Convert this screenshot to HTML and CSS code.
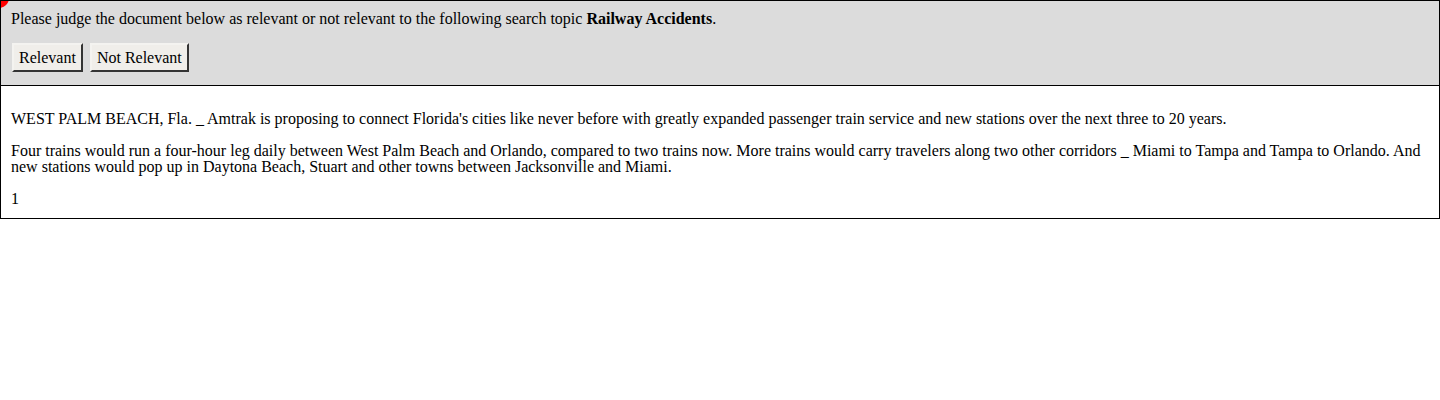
FILE: index.html
```html
<!DOCTYPE html>
<html>
<head>
<meta charset="utf-8">
<title>Relevance judgment</title>
<link rel="stylesheet" href="styles.css">
</head>
<body>
<div class="frame">
  <span class="dot"></span>
  <div class="judge">
    <div class="prompt">Please judge the document below as relevant or not relevant to the following search topic <b>Railway Accidents</b>.</div>
    <div class="actions">
      <button class="btn">Relevant</button>
      <button class="btn">Not Relevant</button>
    </div>
  </div>
  <div class="doc">
    <p>WEST PALM BEACH, Fla. _ Amtrak is proposing to connect Florida's cities like never before with greatly expanded passenger train service and new stations over the next three to 20 years.</p>
    <p>Four trains would run a four-hour leg daily between West Palm Beach and Orlando, compared to two trains now. More trains would carry travelers along two other corridors _ Miami to Tampa and Tampa to Orlando. And new stations would pop up in Daytona Beach, Stuart and other towns between Jacksonville and Miami.</p>
    <p class="num">1</p>
  </div>
</div>
</body>
</html>
```

FILE: styles.css
```css
html, body {
  margin: 0;
  padding: 0;
  background: #fff;
}
body {
  font-family: "Liberation Serif", "Times New Roman", serif;
  font-size: 16px;
  line-height: 16px;
  color: #000;
}
.frame {
  position: relative;
  width: 1440px;
  box-sizing: border-box;
  border: 1px solid #000;
  overflow: hidden;
}
.dot {
  position: absolute;
  left: -12px;
  top: -13px;
  width: 20px;
  height: 20px;
  border-radius: 50%;
  background: #ff0000;
}
.judge {
  background: #dcdcdc;
  border-bottom: 1px solid #000;
  padding: 10px 10px 13px 10px;
}
.actions {
  display: flex;
  gap: 7px;
  margin-top: 16px;
  padding-left: 1px;
}
.btn {
  font-family: "Liberation Serif", "Times New Roman", serif;
  font-size: 16px;
  line-height: 18px;
  height: 29px;
  padding: 0 5px;
  background: #f0eeea;
  color: #000;
  border: 2px outset #f4f3f0;
  border-right-color: #888;
  border-bottom-color: #888;
  border-radius: 0;
}
.doc {
  padding: 9px 10px 11px 10px;
}
.doc p {
  margin: 16px 0;
}
.doc p:last-child {
  margin-bottom: 0;
}
```
